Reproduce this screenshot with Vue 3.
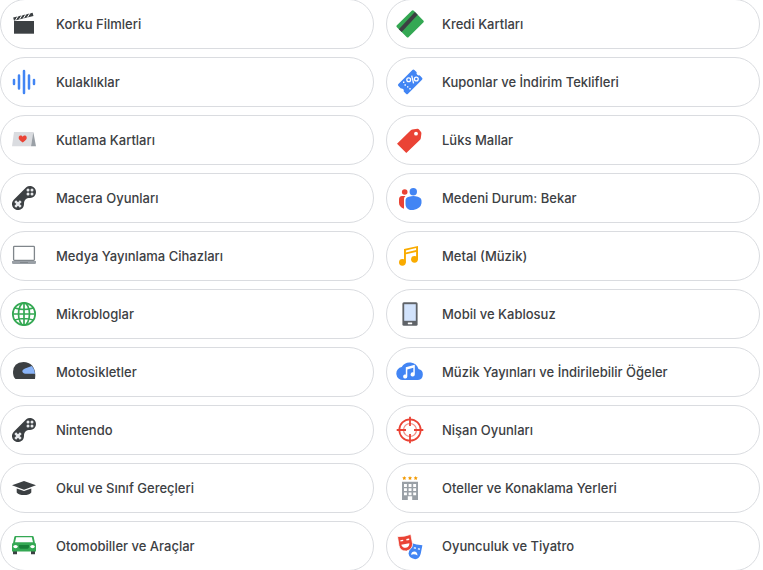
<script setup>
const categories = [
  { icon: 'clapper', label: 'Korku Filmleri' },
  { icon: 'credit-card', label: 'Kredi Kartları' },
  { icon: 'sound', label: 'Kulaklıklar' },
  { icon: 'coupon', label: 'Kuponlar ve İndirim Teklifleri' },
  { icon: 'greeting', label: 'Kutlama Kartları' },
  { icon: 'tag', label: 'Lüks Mallar' },
  { icon: 'gamepad', label: 'Macera Oyunları' },
  { icon: 'people', label: 'Medeni Durum: Bekar' },
  { icon: 'laptop', label: 'Medya Yayınlama Cihazları' },
  { icon: 'note', label: 'Metal (Müzik)' },
  { icon: 'globe', label: 'Mikrobloglar' },
  { icon: 'phone', label: 'Mobil ve Kablosuz' },
  { icon: 'helmet', label: 'Motosikletler' },
  { icon: 'cloud', label: 'Müzik Yayınları ve İndirilebilir Öğeler' },
  { icon: 'gamepad', label: 'Nintendo' },
  { icon: 'target', label: 'Nişan Oyunları' },
  { icon: 'school', label: 'Okul ve Sınıf Gereçleri' },
  { icon: 'hotel', label: 'Oteller ve Konaklama Yerleri' },
  { icon: 'car', label: 'Otomobiller ve Araçlar' },
  { icon: 'masks', label: 'Oyunculuk ve Tiyatro' },
]
</script>

<template>
  <main class="page">
    <svg class="sprite" width="0" height="0" aria-hidden="true">
      <symbol id="clapper" viewBox="0 0 28 28">
        <path d="M4 11h20v12.7H4z" fill="#3c4043" />
        <path d="M3.200 7.600 22.600 2.700l.9 3.300L4 10.800z" fill="#3c4043" />
        <path d="m8.300 5.600-3 4.900M12.300 4.600l-3 4.900M16.300 3.600l-3 4.900M20.300 2.600l-3 4.900" stroke="#fff" stroke-width="1" />
      </symbol>
      <symbol id="credit-card" viewBox="0 0 28 28">
        <path d="M15.700.7q1.100-1 2.100 0l9.500 9.800q1 1 0 2.100L12.700 27q-1 1-2.100 0L.9 17.300q-1-1 0-2.100z" fill="#34a853" />
        <path d="m18.900 1.900 2.800 2.900L5.700 22l-2.900-2.800z" fill="#3c4043" />
      </symbol>
      <symbol id="sound" viewBox="0 0 28 28">
        <path d="M4 12v4M9 7.500v13M14 3v22M19 7.500v13M24 12v4" stroke="#4285f4" stroke-width="2.500" stroke-linecap="round" />
      </symbol>
      <symbol id="coupon" viewBox="0 0 28 28">
        <path d="M16.400 2q1-1 2 0l2.300 2.300q-.6 1.600.6 2.500 1 .9 2.300.5l2.400 2.400q1 1 0 2L12 25.800q-1 1-2 0l-2.300-2.300q.5-1.600-.6-2.500-1-.9-2.200-.4l-2.500-2.500q-1-1 0-2z" fill="#4285f4" />
        <g fill="none" stroke="#fff" stroke-width="1.300">
          <circle cx="12.700" cy="11.800" r="1.900" />
          <circle cx="20.300" cy="11" r="1.900" />
          <path d="m15.700 7.600 1.900 7.800" />
        </g>
        <path d="M7 13.600h1.400V15H7zM8.500 16.300h1.400v1.400H8.500zM11 18.200h1.400v1.400H11zM13.300 20h1.400v1.400h-1.400z" fill="#fff" />
      </symbol>
      <symbol id="greeting" viewBox="0 0 28 28">
        <path d="M4 6h19.3L21 20.200H2z" fill="#dadce0" />
        <path d="M23.300 6 26 20.200h-5z" fill="#9aa0a6" />
        <path d="M12.700 16.500C9.500 14.300 8.500 13 8.700 11.400c.2-2 2.900-2.500 4-.6 1.100-1.900 3.800-1.400 4 .6.2 1.600-.8 2.900-4 5.100z" fill="#ea4335" />
      </symbol>
      <symbol id="tag" viewBox="0 0 28 28">
        <path d="m1 17.700 13.800-13.500q.7-.7 1.600-.8l5-.7q1-.1 1.600.7l2 2.700q.5.600.4 1.500l-.6 4.700q-.1.800-.7 1.400L10.300 27z" fill="#ea4335" />
        <circle cx="20" cy="7.700" r="1.900" fill="#fff" />
      </symbol>
      <symbol id="gamepad" viewBox="0 0 28 28">
        <path d="M15.500 4A6 6 0 1 1 20 14c-2 0-3.300.3-4.500 1.500S14 18 14 20A6 6 0 1 1 4 15.600z" fill="#3c4043" />
        <g fill="#e8eaed">
          <circle cx="18" cy="6" r="1.500" />
          <circle cx="22" cy="6" r="1.500" />
          <circle cx="18" cy="10" r="1.500" />
          <circle cx="22" cy="10" r="1.500" />
        </g>
        <path d="m5.200 17.200 5.600 5.600m0-5.600-5.600 5.600" stroke="#e8eaed" stroke-width="2.500" />
      </symbol>
      <symbol id="people" viewBox="0 0 28 28">
        <circle cx="8.700" cy="8" r="2.800" fill="#ea4335" />
        <path d="M9.500 12H6q-3 .3-3 3.500v3.200q0 4 5 6.100V15q0-1.800 1.500-3z" fill="#ea4335" />
        <circle cx="17.300" cy="7.700" r="3.700" fill="#4285f4" />
        <path d="M13 12.800q4.300-1.400 8.800 0 3.700 1 3.700 4v2.500q-.7 5.200-8.100 6.700h-3.500Q9.500 24.600 9.500 20v-3.400q0-3 3.500-3.800z" fill="#4285f4" />
      </symbol>
      <symbol id="laptop" viewBox="0 0 28 28">
        <rect x="3.600" y="4.400" width="20.800" height="14" rx=".8" fill="#fff" stroke="#80868b" stroke-width="1.300" />
        <path d="M2 19h24v1.700q0 1.300-1.300 1.300H3.300Q2 22 2 20.700z" fill="#9aa0a6" />
        <path d="M10 20h8v1h-8z" fill="#80868b" />
      </symbol>
      <symbol id="note" viewBox="0 0 28 28">
        <g fill="#f9ab00">
          <circle cx="6.400" cy="20.300" r="3.400" />
          <circle cx="18.500" cy="17.300" r="3.400" />
          <path d="M8 7 22 4v13.500h-1.900V10L9.900 12.300v8.200H8zM9.900 8.400v2l10.200-2.300v-2z" fill-rule="evenodd" />
        </g>
      </symbol>
      <symbol id="globe" viewBox="0 0 28 28">
        <g fill="none" stroke="#34a853" stroke-width="1.700">
          <circle cx="14" cy="14" r="11.200" />
          <ellipse cx="14" cy="14" rx="5.500" ry="11.200" />
          <path d="M14 2.700v22.600M2.700 14h22.600M4.800 8q9.200 3 18.400 0M4.800 20q9.200-3 18.400 0" />
        </g>
      </symbol>
      <symbol id="phone" viewBox="0 0 28 28">
        <rect x="6.400" y="2.200" width="15.200" height="23.600" rx="1.500" fill="#5f6368" />
        <path d="M8.200 4.200h11.600v16.600H8.200z" fill="#d2e3fc" />
        <rect x="11.800" y="22.400" width="4.400" height="1.800" rx=".4" fill="#fff" />
      </symbol>
      <symbol id="helmet" viewBox="0 0 28 28">
        <path d="M13.500 4C20.500 4 25.300 9 25.300 17.500L25 21H5.500Q3 18.800 3 14 3.200 4.600 13.500 4z" fill="#3c4043" />
        <path d="M21.800 8q3 3 3.300 7.800H15.500q-3.200-.5-3.200-2.800 0-1.600 2.700-2.600z" fill="#8ab4f8" />
      </symbol>
      <symbol id="cloud" viewBox="0 0 28 28">
        <path d="M7 22a6.500 6.500 0 0 1-1.300-12.900A9.200 9.200 0 0 1 22.500 11 5.600 5.600 0 0 1 22 22z" fill="#4285f4" />
        <path d="M8.500 16.500a2.100 2.100 0 1 0 2.800 2v-7.100l6-1.600v4.700a2.100 2.100 0 1 0 1.500 2V6.700L9.800 9.200v7.300z" fill="#fff" />
      </symbol>
      <symbol id="target" viewBox="0 0 28 28">
        <g fill="none" stroke="#ea4335">
          <circle cx="14" cy="14" r="10.700" stroke-width="1.700" />
          <circle cx="14" cy="14" r="6.500" stroke="#f28b82" stroke-width="1.200" />
          <path d="M14 .7v9.300M14 18v9.300M.7 14H10M18 14h9.300" stroke-width="1.800" />
        </g>
      </symbol>
      <symbol id="school" viewBox="0 0 28 28">
        <path d="m2 11.300 12-4.300 12 4.300-12 4.400z" fill="#3c4043" />
        <path d="m6.700 14.400 7.300 2.700 7.300-2.700v4Q19 21 14 21t-7.300-2.600z" fill="#3c4043" />
      </symbol>
      <symbol id="hotel" viewBox="0 0 28 28">
        <path d="M6 7.700h16V26h-5.800v-3.800h-4.400V26H6z" fill="#9aa0a6" />
        <path d="M8 10h2.900v2.900H8zM12.600 10h2.900v2.900h-2.900zM17.200 10h2.900v2.900h-2.900zM8 14.200h2.900v2.900H8zM12.600 14.200h2.900v2.900h-2.900zM17.200 14.200h2.900v2.900h-2.900zM8 18.400h2.900v2.900H8zM12.600 18.400h2.900v2.900h-2.900zM17.200 18.400h2.900v2.900h-2.900z" fill="#fff" />
        <path d="m8.300 2 .6 1.300 1.500.2-1.100 1 .3 1.500-1.300-.7L7 6l.3-1.500-1.100-1 1.500-.2zM14 2l.6 1.300 1.500.2-1.100 1 .3 1.500-1.300-.7-1.300.7.300-1.500-1.100-1 1.500-.2zM19.700 2l.6 1.300 1.500.2-1.100 1L21 6l-1.300-.7-1.300.7.300-1.500-1.100-1 1.500-.2z" fill="#f29900" />
      </symbol>
      <symbol id="car" viewBox="0 0 28 28">
        <path d="M3 19h4v3.300H3zM21 19h4v3.300h-4z" fill="#3c4043" />
        <path d="M5.500 4h17q1 0 1.200 1l1.200 5.700q1.100.5 1.100 2v6.700H2v-6.700q0-1.500 1.100-2L4.300 5q.2-1 1.200-1z" fill="#34a853" />
        <path d="M6.200 5.200h15.600l1.200 5H5z" fill="#fff" />
        <path d="M9 13h10v1.200q0 2.600-2.500 2.600h-5Q9 16.800 9 14.200z" fill="#188038" />
        <ellipse cx="5.500" cy="14.600" rx="2.200" ry="1.600" fill="#fff" />
        <ellipse cx="22.500" cy="14.600" rx="2.200" ry="1.600" fill="#fff" />
      </symbol>
      <symbol id="masks" viewBox="0 0 28 28">
        <path d="M15.500 11q4.500 2 10.900 2.300l-1.700 8.500q-1.400 5.700-6.200 5.300-5.200-.8-6-5.500z" fill="#4285f4" />
        <path d="m17.800 15.800 2.200.4m1.900.6 2.100.3" stroke="#fff" stroke-width="1.300" />
        <path d="M15 22.700q.7-3.200 3.300-3.200 3 .2 3.200 4-3-2-6.500-.8z" fill="#fff" />
        <path d="M1.500 4.500Q8.500 5 14.800 2.300l1.700 9q.5 5.800-6 7.800-6.500.2-7.600-5.700z" fill="#ea4335" stroke="#fff" stroke-width=".8" />
        <path d="m4.400 8.900 2.800-.5m3.200-.6 2.800-.5" stroke="#fff" stroke-width="1.400" />
        <path d="m5.200 12.700 8.200-1.500q0 3.700-3.400 4.600-3.600.3-4.800-3.100z" fill="#fff" />
      </symbol>
    </svg>

    <ul class="categories">
      <li v-for="item in categories" :key="item.label" class="category">
        <svg class="icon" viewBox="0 0 28 28" aria-hidden="true"><use :href="'#' + item.icon" /></svg>
        <span class="label">{{ item.label }}</span>
      </li>
    </ul>
  </main>
</template>

<style>
body {
  background: #fff;
}
</style>

<style scoped>
.page {
  max-height: 100vh;
  overflow: hidden;
  color: #3c4043;
  font: 500 13px/20px Inter, Roboto, "Liberation Sans", sans-serif;
}

.sprite {
  position: absolute;
}

.categories {
  display: grid;
  grid-template-columns: 1fr 1fr;
  gap: 8px 12px;
  margin: -1px 0 0;
  padding: 0 3px 0 0;
  list-style: none;
}

.category {
  display: flex;
  align-items: center;
  gap: 18px;
  box-sizing: border-box;
  min-height: 50px;
  padding: 0 9px;
  border: 1px solid #dadce0;
  border-radius: 25px;
}

.icon {
  flex: none;
  width: 28px;
  height: 28px;
}

.label {
  min-width: 0;
}
</style>
